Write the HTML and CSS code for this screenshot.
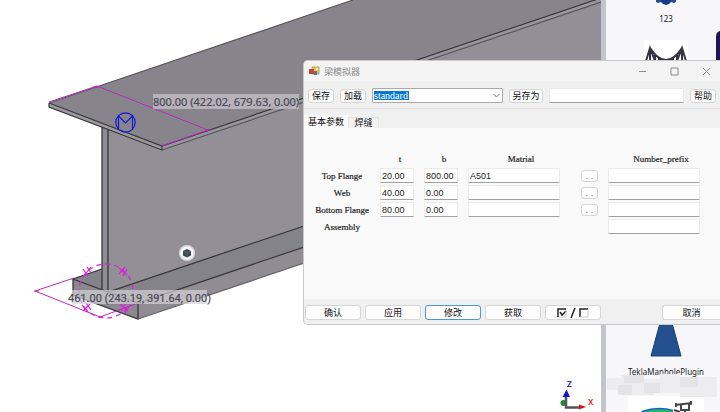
FILE: index.html
```html
<!DOCTYPE html>
<html lang="zh-CN">
<head>
<meta charset="utf-8">
<title>梁模拟器</title>
<link rel="stylesheet" href="styles.css">
</head>
<body>
<main class="workspace">
  <section class="viewport">
    <svg class="model" viewBox="0 0 601 412" preserveAspectRatio="xMinYMin slice">
      <!-- bottom flange -->
      <path d="M73 279 101 269 108 291 303 226 601 126V146L138 303Z" fill="#85838a"/>
      <path d="M73 279 138 303V319L73 295Z" fill="#8b898f"/>
      <path d="M138 303 601 147V163L138 319Z" fill="#8f8d93"/>
      <!-- web -->
      <path d="M108 127H601V126L108 292Z" fill="#929096"/>
      <path d="M102 126 108 128V292L102 290Z" fill="#8d8c95"/>
      <path d="M162 148 601 0V128L108 292V128Z" fill="#929096"/>
      <g fill="none" stroke="#38373b" stroke-width="1.3">
        <path d="M102 127V290M108 129V292L601 126M102 269 73 279 138 303 601 147M73 279V295L138 319V303M102 290 108 292"/>
        <path d="M138 319 601 163" stroke="#68676b"/>
      </g>
      <!-- top flange -->
      <path d="M49 103 353 0H601V-1L162 146Z" fill="#87858b"/>
      <path d="M49 103 162 146V150L49 107Z" fill="#9b9a9f"/>
      <path d="M162 146 601-2V2L162 150Z" fill="#99979d"/>
      <g fill="none" stroke="#38373b" stroke-width="1.2">
        <path d="M49 103 162 146 601-2M49 103V107L162 150V146"/>
        <path d="M162 150 601 2M49 103 353 0" stroke="#57565a"/>
      </g>
      <!-- dimension lines -->
      <g fill="none" stroke="#b829bd" stroke-width="1">
        <path d="M49 102 97 86 208 130 162 146M93 87H99M205 130H211"/>
        <path d="M35 291 74 278M35 291 100 317 138 303M34 291H39M98 317H103"/>
      </g>
      <g fill="none" stroke="#e01ce0" stroke-width="1.2">
        <circle cx="106" cy="291" r="27" stroke-dasharray="5 4"/>
        <path d="M83 269 88 276M87 267 91 273M91 267 83 277M119 274 125 267M123 276 127 269M119 268 127 275M82 305 88 312M86 303 91 310M90 304 83 311M121 311 126 303M125 313 130 305M120 304 128 311"/>
      </g>
      <g fill="none" stroke="#1418dc" stroke-width="1.2">
        <circle cx="125.500" cy="122.500" r="9.700"/>
        <path d="M118.500 129V116L125.500 123 132.500 116V129"/>
      </g>
      <rect x="153" y="94" width="146" height="15" fill="#c4c2c8" fill-opacity=".75"/>
      <text class="dimension" x="153" y="106">800.00 (422.02, 679.63, 0.00)</text>
      <rect x="72" y="290" width="135" height="14" fill="#d3d1d6" fill-opacity=".7"/>
      <text class="dimension dimension-alt" x="68" y="302">461.00 (243.19, 391.64, 0.00)</text>
      <circle cx="187" cy="253" r="8" fill="#d9dbe2"/>
      <circle cx="187" cy="253" r="6.500" fill="#f5f6f8"/>
      <path d="M187 249 191 251V255.500L187 257.500 183 255.500V251Z" fill="#3c424e"/>
      <path d="M183 251 187 253 191 251M187 253V257" fill="none" stroke="#7c838f" stroke-width=".6"/>
      <!-- axis marker -->
      <circle cx="563.500" cy="403" r="3" fill="#168d28"/>
      <path d="M566 397V407.500H580" fill="none" stroke="#54545a" stroke-width="2.500"/>
      <path d="M562.500 397 566.500 389.500 570 397Z" fill="#1018d8"/>
      <path d="M579 404.500 586 407 579 409.500Z" fill="#d01818"/>
      <text class="axis" x="567" y="387" fill="#2530c4">Z</text>
      <text class="axis" x="588" y="405" fill="#d03830">X</text>
    </svg>
  </section>

  <aside class="catalog">
    <svg class="art art-gear" viewBox="0 0 24 8"><path d="M2 0H7V2L4 3 2 2ZM17 0H22V2L20 3 17 2Z" fill="#264b94"/><path d="M7 0H17V2L15 4 12 5 9 4 7 2Z" fill="#123d86"/></svg>
    <span class="caption">123</span>
    <svg class="art art-bridge" viewBox="0 0 44 24"><path d="M0 0H44V24H0Z" fill="#fff"/><path d="M2 21 6 8 11 21M6 8V22M38 8V22M33 21 38 8 42 21M6 8Q22 32 38 8M11 15V22M15 18V22M29 18V22M33 15V22" fill="none" stroke="#353440" stroke-width="2"/></svg>
    <svg class="art art-cone" viewBox="0 0 32 34"><path d="M10 0H22L31 33H1Z" fill="#25508f" stroke="#173d78"/></svg>
    <span class="caption caption-plugin">TeklaManholePlugin</span>
    <svg class="art art-manhole" viewBox="0 0 76 16"><path d="M0 0H76V16H0Z" fill="#fff"/><path d="M12 16Q28 10 45 15V16Z" fill="#21b866"/><path d="M14 15.500Q30 10 45 14.500" fill="none" stroke="#1a5fd0" stroke-width="1.500"/><path d="M47 9 64 7M48 7V11M63 5V9M53 9V14H61V8M57 14V16M46 14 52 16" fill="none" stroke="#45454a" stroke-width="2"/></svg>
    <svg class="mosaic" viewBox="0 0 114 26"><path d="M1 5H15V2H38V6H54V1H74V4H111V24H74V20H48V22H12V17H1Z" fill="#ededef"/><path d="M18 2H38V10H18ZM38 10H54V20H38ZM74 4H92V14H74ZM12 12H26V22H12Z" fill="#e4e4e7"/></svg>
    <span class="edge-tile"></span>
  </aside>
</main>

<form class="dialog">
  <header class="titlebar">
    <svg class="app-icon" viewBox="0 0 11 11"><path d="M3 1H10V8H3Z" fill="#f0c542" stroke="#a58a48" stroke-width=".7"/><path d="M0 3H5V8H0Z" fill="#c44536"/><path d="M5 5H8V9H5Z" fill="#4774bd"/><path d="M7 2H9V4H7Z" fill="#fff4b5"/></svg>
    <h1 class="title">梁模拟器</h1>
    <button class="window-button" type="button" aria-label="最小化"><svg viewBox="0 0 9 9"><path d="M1 4.500H8"/></svg></button>
    <button class="window-button" type="button" aria-label="最大化"><svg viewBox="0 0 9 9"><path d="M1 1H8V8H1Z"/></svg></button>
    <button class="window-button" type="button" aria-label="关闭"><svg viewBox="0 0 9 9"><path d="M1 1 8 8M8 1 1 8"/></svg></button>
  </header>

  <div class="toolbar">
    <button class="button" type="button">保存</button>
    <button class="button" type="button">加载</button>
    <div class="combo">
      <select class="preset" aria-label="standard"><option>standard</option></select>
      <svg class="chevron" viewBox="0 0 7 5"><path d="M.5 1 3.500 4 6.500 1"/></svg>
    </div>
    <button class="button button-wide" type="button">另存为</button>
    <input class="field save-name" aria-label="另存为">
    <button class="button" type="button">帮助</button>
  </div>

  <nav class="tabs" role="tablist">
    <button class="tab tab-active" type="button" role="tab" aria-selected="true">基本参数</button>
    <button class="tab" type="button" role="tab" aria-selected="false">焊缝</button>
  </nav>

  <div class="parameters">
    <div class="grid">
      <span></span><span class="heading">t</span><span class="heading">b</span><span class="heading heading-wide">Matrial</span><span></span><span class="heading heading-wide">Number_prefix</span>

      <label class="name" for="top-t">Top Flange</label>
      <input class="field" id="top-t" value="20.00"><input class="field" aria-label="b" value="800.00"><input class="field" aria-label="Matrial" value="A501"><button class="browse" type="button">. .</button><input class="field" aria-label="Number_prefix">

      <label class="name" for="web-t">Web</label>
      <input class="field" id="web-t" value="40.00"><input class="field" aria-label="b" value="0.00"><input class="field" aria-label="Matrial"><button class="browse" type="button">. .</button><input class="field" aria-label="Number_prefix">

      <label class="name" for="bottom-t">Bottom Flange</label>
      <input class="field" id="bottom-t" value="80.00"><input class="field" aria-label="b" value="0.00"><input class="field" aria-label="Matrial"><button class="browse" type="button">. .</button><input class="field" aria-label="Number_prefix">

      <label class="name" for="assembly">Assembly</label>
      <input class="field last-column" id="assembly">
    </div>
  </div>

  <footer class="actions">
    <button class="button action" type="button">确认</button>
    <button class="button action" type="button">应用</button>
    <button class="button action action-focus" type="button">修改</button>
    <button class="button action" type="button">获取</button>
    <button class="button action" type="button" aria-label="全选"><svg class="toggle-icon" viewBox="0 0 32 10"><path d="M9 1H1V9M3 4 5 7 9 3M14 10 18 0M23 9V1H31" fill="none" stroke="#222" stroke-width="1.500"/><path d="M2 9H9V2M23 9H31V1" fill="none" stroke="#ccc"/></svg></button>
    <button class="button action action-cancel" type="button">取消</button>
  </footer>
</form>
</body>
</html>
```
FILE: styles.css
```css
* { box-sizing: border-box; }

body {
  margin: 0;
  height: 100vh;
  overflow: hidden;
  background: #fff;
  color: #222;
  font-family: "Liberation Sans", "Noto Sans CJK SC", sans-serif;
  font-size: 9px;
}

button, input, select { font: inherit; color: inherit; margin: 0; }

.workspace { display: flex; height: 100%; }
.viewport { flex: 1; min-width: 0; overflow: hidden; }
.model { display: block; width: 100%; height: 100%; }
.dimension { font: 11px "Noto Sans", sans-serif; fill: #4b4a58; stroke: #4b4a58; stroke-width: .2px; }
.dimension-alt { font-family: Roboto, sans-serif; }
.axis { font: bold 8px "Noto Sans", sans-serif; }

/* Component catalog */
.catalog {
  position: relative;
  display: flex;
  flex-direction: column;
  align-items: center;
  width: 119px;
  padding-left: 6px;
  border-left: 5px solid #c3c4cd;
  background: #f7f7fa;
  overflow: hidden;
}
.art { flex: none; display: block; }
.art-gear { width: 24px; height: 8px; }
.caption { margin-top: 4px; font: 8px/14px "Noto Sans", sans-serif; color: #222; }
.art-bridge { width: 44px; height: 24px; margin-top: 14px; }
.art-cone { width: 32px; height: 34px; margin-top: 259px; }
.caption-plugin { margin-top: 8px; }
.art-manhole { width: 76px; height: 16px; margin-top: 17px; }
.mosaic { position: absolute; left: 0; top: 373px; width: 114px; height: 26px; }
.edge-tile { position: absolute; right: -8px; top: 31px; width: 12px; height: 34px; border-radius: 5px; background: #211653; }

/* Dialog window */
.dialog {
  position: absolute;
  left: 303px;
  right: 0;
  top: 60px;
  display: flex;
  flex-direction: column;
  border: 1px solid #c9c9cb;
  border-right: 0;
  border-radius: 5px 0 0 5px;
  background: #f0f0f0;
  overflow: hidden;
}
.titlebar { display: flex; align-items: center; height: 20px; padding: 0 9px 0 5px; background: #f3f3f3; }
.app-icon { width: 11px; height: 11px; }
.title { flex: 1; margin: 0 0 0 4px; font-size: 9px; font-weight: 400; color: #8a8a8a; }
.window-button { display: flex; width: 9px; height: 9px; margin-left: 23px; padding: 0; border: 0; background: none; }
.window-button svg { width: 9px; height: 9px; fill: none; stroke: #8c8c8c; }

.toolbar { display: flex; align-items: center; gap: 6px; height: 28px; padding: 2px 4px 0; border-bottom: 1px solid #e2e2e2; }
.button {
  display: flex;
  flex: none;
  align-items: center;
  justify-content: center;
  width: 26px;
  height: 14px;
  padding: 0;
  border: 1px solid #d6d6d6;
  border-radius: 3px;
  background: #fdfdfd;
  color: #111;
  white-space: nowrap;
}
.button-wide { width: 34px; }
.combo { position: relative; flex: 1; min-width: 0; }
.preset {
  display: block;
  appearance: none;
  width: 100%;
  height: 15px;
  padding: 0 1px;
  border: 1px solid #aaa;
  border-radius: 1px;
  background: linear-gradient(#0878cf, #0878cf) 1px 2px / 35px 9px no-repeat #fff;
  font-family: "Liberation Serif", serif;
  font-size: 10px;
  color: #fff;
}
.chevron { position: absolute; right: 3px; top: 5px; width: 7px; height: 5px; fill: none; stroke: #777; pointer-events: none; }
.field {
  width: 100%;
  min-width: 0;
  height: 15px;
  padding: 0 1px;
  border: 1px solid #ebebeb;
  border-bottom-color: #a2a2a2;
  border-radius: 1px;
  background: #fff;
}
.save-name { flex: 1; width: auto; }

.tabs { display: flex; align-items: flex-end; height: 19px; }
.tab { height: 11px; width: 31px; padding: 0; border: 1px solid #e5e5e5; border-bottom: 0; background: #f3f3f3; color: #111; line-height: 11px; white-space: nowrap; }
.tab-active { width: 44px; height: 13px; border-color: #f9f9f9; background: #f9f9f9; }

.parameters { height: 171px; padding: 22px 20px 0 10px; background: #f9f9f9; }
.grid {
  display: grid;
  grid-template-columns: 56px 34px 34px minmax(0, 1fr) 28px minmax(0, 1fr);
  grid-auto-rows: 17px;
  column-gap: 10px;
  align-items: center;
}
.heading, .name {
  text-align: center;
  white-space: nowrap;
  font-family: "Liberation Serif", serif;
  -webkit-text-stroke: .2px #222;
}
.heading { padding-left: 6px; }
.heading-wide { padding-left: 14px; }
.browse { justify-self: end; width: 17px; height: 12px; padding: 0; border: 1px solid #d5d5d5; border-radius: 3px; background: #fdfdfd; color: #555; line-height: 8px; }
.last-column { grid-column: 6; }

.actions { display: flex; align-items: center; gap: 4px; height: 25px; padding: 3px 0 1px 1px; }
.action { width: 56px; height: 15px; }
.action-focus { border-color: #4a9cc0; }
.action-cancel { width: 58px; margin-left: auto; border-right: 0; border-radius: 3px 0 0 3px; }
.toggle-icon { width: 32px; height: 10px; }
```
